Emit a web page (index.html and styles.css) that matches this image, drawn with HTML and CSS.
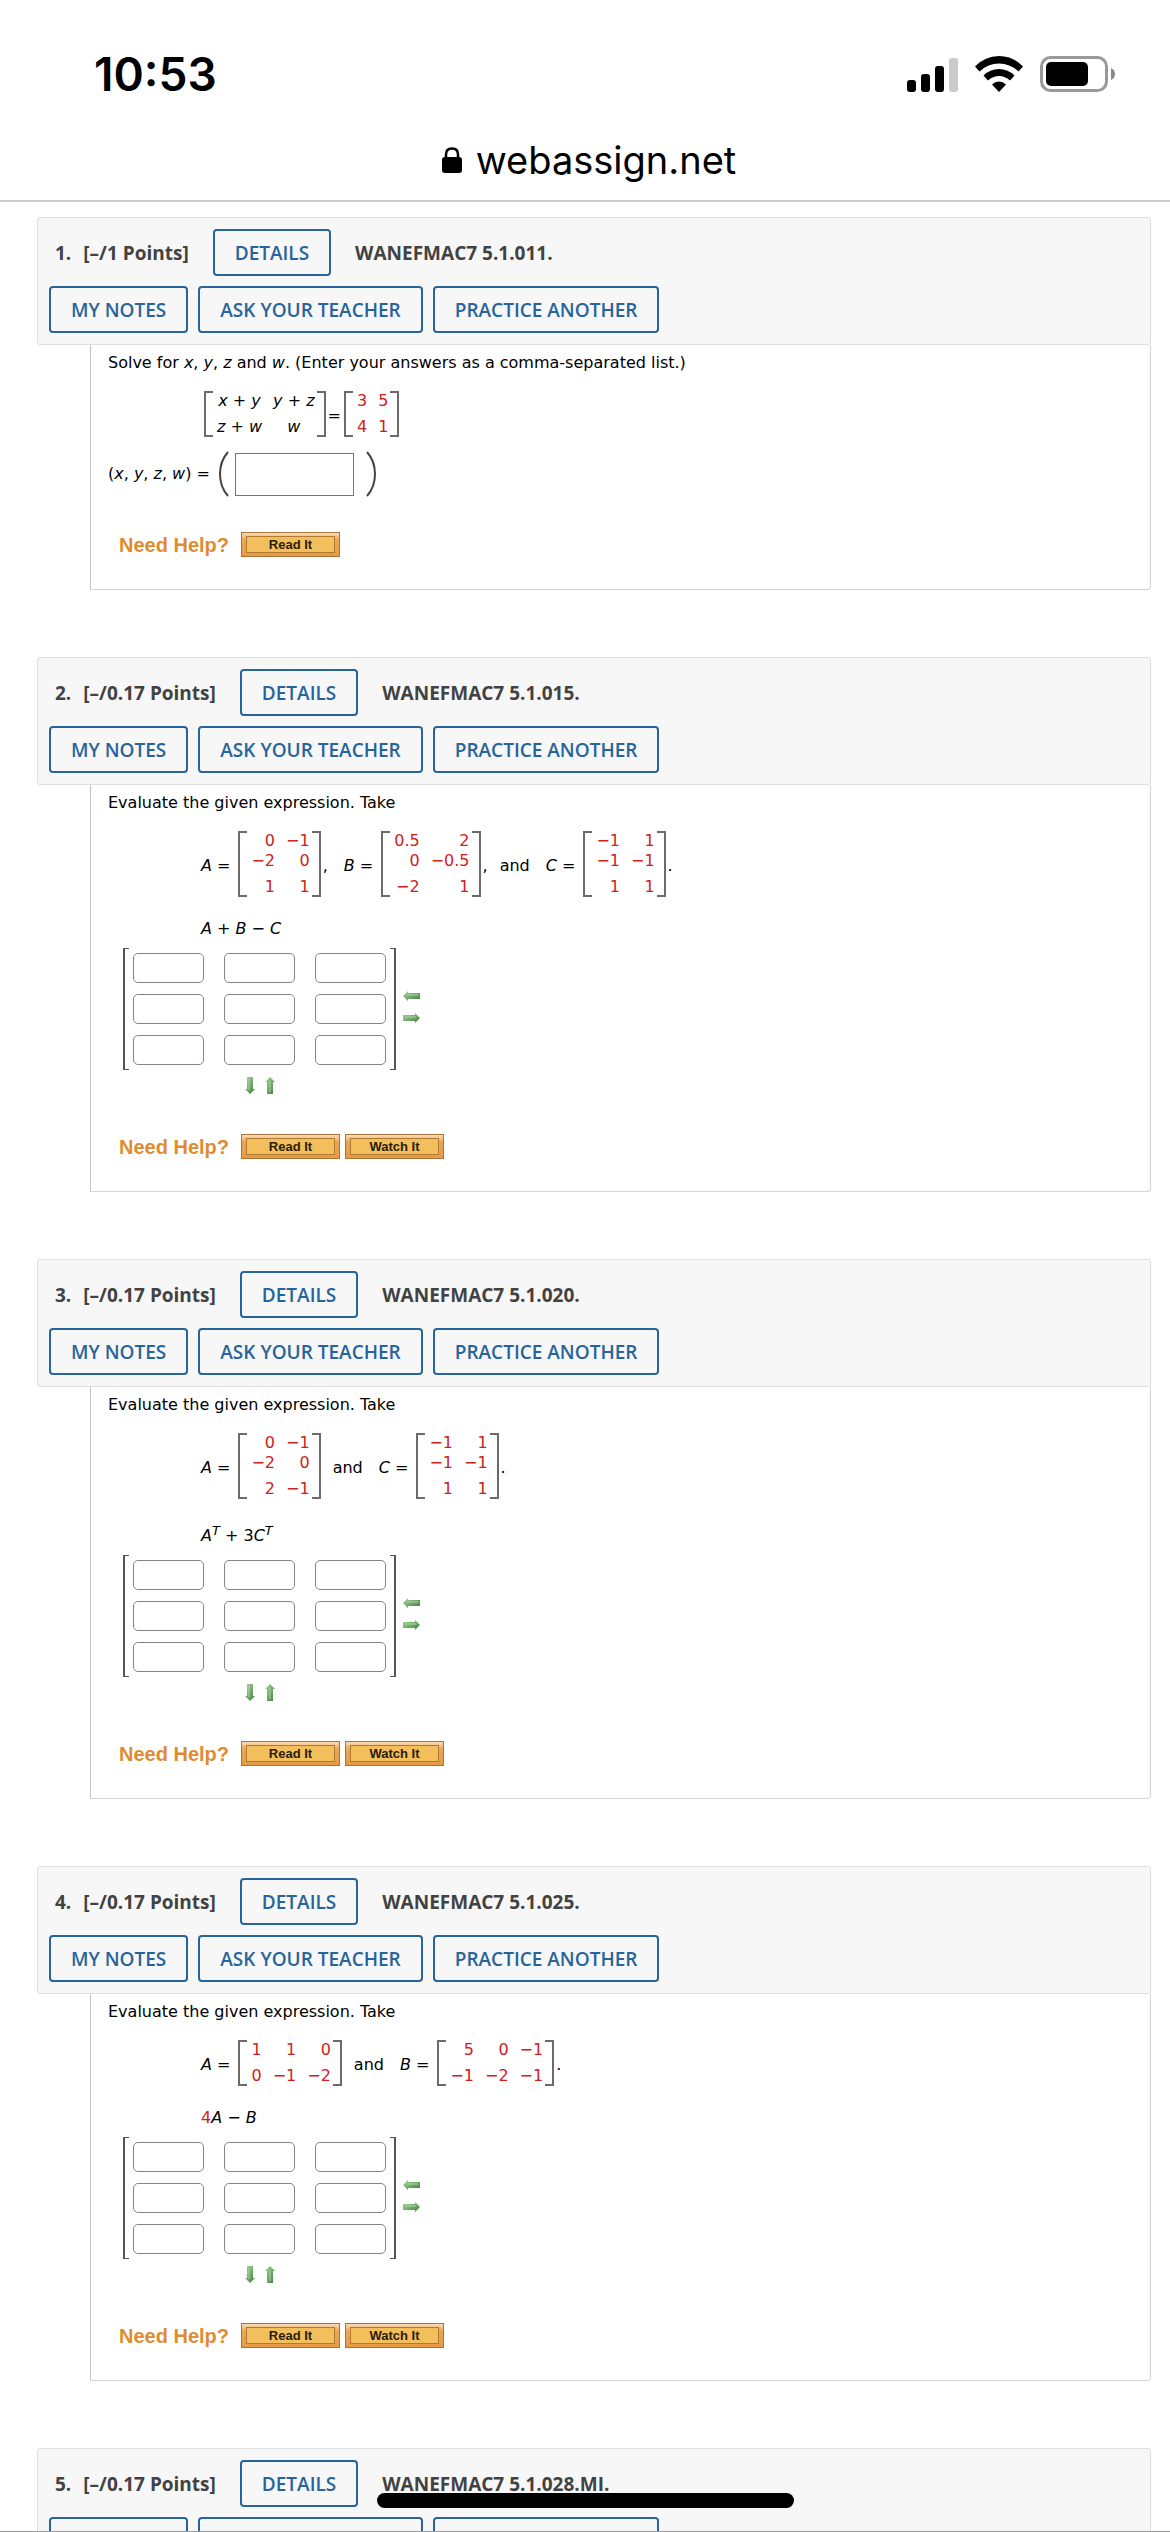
FILE: index.html
```html
<!DOCTYPE html>
<html lang="en">
<head>
    <meta charset="UTF-8">
    <meta name="viewport" content="width=device-width, initial-scale=1.0">
    <title>webassign.net</title>
    <link rel="stylesheet" href="styles.css">
</head>
<body>

<!-- shared icons -->
<svg class="defs" width="0" height="0" aria-hidden="true">
    <defs>
        <linearGradient id="green" x1="0" y1="0" x2="1" y2="1">
            <stop offset="0" stop-color="#a9d8a0"/>
            <stop offset="1" stop-color="#3f7d3a"/>
        </linearGradient>
        <symbol id="arrow-left" viewBox="0 0 17 10">
            <path d="M0 5L5 0V2H17V8H5V10Z" fill="url(#green)"/>
            <path d="M4 4H15" stroke="#a5d69c" stroke-width="1"/>
        </symbol>
        <symbol id="arrow-right" viewBox="0 0 17 10">
            <path d="M17 5L12 0V2H0V8H12V10Z" fill="url(#green)"/>
            <path d="M2 4H13" stroke="#a5d69c" stroke-width="1"/>
        </symbol>
        <symbol id="arrow-down" viewBox="0 0 10 17">
            <path d="M5 17L0 12H2V0H8V12H10Z" fill="url(#green)"/>
            <path d="M4 2V13" stroke="#a5d69c" stroke-width="1"/>
        </symbol>
        <symbol id="arrow-up" viewBox="0 0 10 17">
            <path d="M5 0L0 5H2V17H8V5H10Z" fill="url(#green)"/>
            <path d="M5 4V15" stroke="#a5d69c" stroke-width="1"/>
        </symbol>
    </defs>
</svg>

<div class="screen">
    <header class="browser-bar">
        <div class="status">
            <span class="time">10:53</span>
            <div class="status-icons">
                <svg width="51" height="36" viewBox="0 0 51 36">
                    <rect x="0" y="24" width="9" height="12" rx="3"/>
                    <rect x="14" y="18" width="9" height="18" rx="3"/>
                    <rect x="28" y="10" width="9" height="26" rx="3"/>
                    <rect x="42" y="2" width="9" height="34" rx="3" fill="#cbcbcb"/>
                </svg>
                <svg width="48" height="36" viewBox="0 0 48 36">
                    <path d="M0 10.500Q10 0 24 0T48 10.500L43.500 15.500Q35 7.500 24 7.500T4.500 15.500Z"/>
                    <path d="M8.500 19.500Q15 13 24 13T39.500 19.500L35 24.500Q30 20 24 20T13 24.500Z"/>
                    <path d="M17 28.500Q20 25.500 24 25.500T31 28.500L24 36Z"/>
                </svg>
                <svg width="75" height="36" viewBox="0 0 75 36">
                    <rect x="1.500" y="1.500" width="65" height="33" rx="9" fill="none" stroke="#999" stroke-width="3"/>
                    <rect x="6" y="6" width="42" height="24" rx="5"/>
                    <path d="M71 12Q75 14 75 18T71 24Z" fill="#888"/>
                </svg>
            </div>
        </div>
        <div class="address">
            <svg width="20" height="26" viewBox="0 0 20 26">
                <rect x="0" y="10" width="20" height="16" rx="3"/>
                <path d="M4 12V7.500Q4 1.500 10 1.500T16 7.500V12" fill="none" stroke="#000" stroke-width="2.500"/>
            </svg>
            <span>webassign.net</span>
        </div>
    </header>

    <main class="questions">

        <section class="question">
            <div class="question-header">
                <div class="title-row">
                    <span class="number">1.</span>
                    <span>[–/1 Points]</span>
                    <button class="btn details">DETAILS</button>
                    <span>WANEFMAC7 5.1.011.</span>
                </div>
                <div class="button-row">
                    <button class="btn">MY NOTES</button>
                    <button class="btn">ASK YOUR TEACHER</button>
                    <button class="btn">PRACTICE ANOTHER</button>
                </div>
            </div>
            <div class="question-body">
                <p class="prompt">Solve for <i>x</i>, <i>y</i>, <i>z</i> and <i>w</i>. (Enter your answers as a comma-separated list.)</p>
                <div class="equation">
                    <table class="matrix centered">
                        <tr><td><i>x</i> + <i>y</i></td><td><i>y</i> + <i>z</i></td></tr>
                        <tr><td><i>z</i> + <i>w</i></td><td><i>w</i></td></tr>
                    </table>
                    <span class="punct">=</span>
                    <table class="matrix red">
                        <tr><td>3</td><td>5</td></tr>
                        <tr><td>4</td><td>1</td></tr>
                    </table>
                </div>
                <div class="tuple">
                    <label for="tuple">(<i>x</i>, <i>y</i>, <i>z</i>, <i>w</i>) =</label>
                    <svg width="10" height="46" viewBox="0 0 10 46"><path d="M9 1Q1 10 1 23T9 45" /></svg>
                    <input type="text" id="tuple">
                    <svg width="10" height="46" viewBox="0 0 10 46"><path d="M1 1Q9 10 9 23T1 45" /></svg>
                </div>
                <div class="help">
                    <span>Need Help?</span>
                    <button><span>Read It</span></button>
                </div>
            </div>
        </section>

        <section class="question">
            <div class="question-header">
                <div class="title-row">
                    <span class="number">2.</span>
                    <span>[–/0.17 Points]</span>
                    <button class="btn details">DETAILS</button>
                    <span>WANEFMAC7 5.1.015.</span>
                </div>
                <div class="button-row">
                    <button class="btn">MY NOTES</button>
                    <button class="btn">ASK YOUR TEACHER</button>
                    <button class="btn">PRACTICE ANOTHER</button>
                </div>
            </div>
            <div class="question-body">
                <p class="prompt">Evaluate the given expression. Take</p>
                <div class="equation">
                    <span class="term"><i>A</i> =</span>
                    <table class="matrix red">
                        <tr><td>0</td><td>−1</td></tr>
                        <tr><td>−2</td><td>0</td></tr>
                        <tr><td>1</td><td>1</td></tr>
                    </table>
                    <span class="punct">,</span>
                    <span class="term"><i>B</i> =</span>
                    <table class="matrix red">
                        <tr><td>0.5</td><td>2</td></tr>
                        <tr><td>0</td><td>−0.5</td></tr>
                        <tr><td>−2</td><td>1</td></tr>
                    </table>
                    <span class="punct">,</span>
                    <span class="word">and</span>
                    <span class="term"><i>C</i> =</span>
                    <table class="matrix red">
                        <tr><td>−1</td><td>1</td></tr>
                        <tr><td>−1</td><td>−1</td></tr>
                        <tr><td>1</td><td>1</td></tr>
                    </table>
                    <span class="punct">.</span>
                </div>
                <p class="expression"><i>A</i> + <i>B</i> − <i>C</i></p>
                <div class="answer">
                    <div class="cells">
                        <input type="text" aria-label="row 1 column 1"><input type="text" aria-label="row 1 column 2"><input type="text" aria-label="row 1 column 3">
                        <input type="text" aria-label="row 2 column 1"><input type="text" aria-label="row 2 column 2"><input type="text" aria-label="row 2 column 3">
                        <input type="text" aria-label="row 3 column 1"><input type="text" aria-label="row 3 column 2"><input type="text" aria-label="row 3 column 3">
                    </div>
                    <div class="resize-columns">
                        <button aria-label="remove column"><svg width="17" height="10"><use href="#arrow-left"/></svg></button>
                        <button aria-label="add column"><svg width="17" height="10"><use href="#arrow-right"/></svg></button>
                    </div>
                    <div class="resize-rows">
                        <button aria-label="add row"><svg width="10" height="17"><use href="#arrow-down"/></svg></button>
                        <button aria-label="remove row"><svg width="10" height="17"><use href="#arrow-up"/></svg></button>
                    </div>
                </div>
                <div class="help">
                    <span>Need Help?</span>
                    <button><span>Read It</span></button>
                    <button><span>Watch It</span></button>
                </div>
            </div>
        </section>

        <section class="question">
            <div class="question-header">
                <div class="title-row">
                    <span class="number">3.</span>
                    <span>[–/0.17 Points]</span>
                    <button class="btn details">DETAILS</button>
                    <span>WANEFMAC7 5.1.020.</span>
                </div>
                <div class="button-row">
                    <button class="btn">MY NOTES</button>
                    <button class="btn">ASK YOUR TEACHER</button>
                    <button class="btn">PRACTICE ANOTHER</button>
                </div>
            </div>
            <div class="question-body">
                <p class="prompt">Evaluate the given expression. Take</p>
                <div class="equation">
                    <span class="term"><i>A</i> =</span>
                    <table class="matrix red">
                        <tr><td>0</td><td>−1</td></tr>
                        <tr><td>−2</td><td>0</td></tr>
                        <tr><td>2</td><td>−1</td></tr>
                    </table>
                    <span class="word">and</span>
                    <span class="term"><i>C</i> =</span>
                    <table class="matrix red">
                        <tr><td>−1</td><td>1</td></tr>
                        <tr><td>−1</td><td>−1</td></tr>
                        <tr><td>1</td><td>1</td></tr>
                    </table>
                    <span class="punct">.</span>
                </div>
                <p class="expression"><i>A<sup>T</sup></i> + 3<i>C<sup>T</sup></i></p>
                <div class="answer">
                    <div class="cells">
                        <input type="text" aria-label="row 1 column 1"><input type="text" aria-label="row 1 column 2"><input type="text" aria-label="row 1 column 3">
                        <input type="text" aria-label="row 2 column 1"><input type="text" aria-label="row 2 column 2"><input type="text" aria-label="row 2 column 3">
                        <input type="text" aria-label="row 3 column 1"><input type="text" aria-label="row 3 column 2"><input type="text" aria-label="row 3 column 3">
                    </div>
                    <div class="resize-columns">
                        <button aria-label="remove column"><svg width="17" height="10"><use href="#arrow-left"/></svg></button>
                        <button aria-label="add column"><svg width="17" height="10"><use href="#arrow-right"/></svg></button>
                    </div>
                    <div class="resize-rows">
                        <button aria-label="add row"><svg width="10" height="17"><use href="#arrow-down"/></svg></button>
                        <button aria-label="remove row"><svg width="10" height="17"><use href="#arrow-up"/></svg></button>
                    </div>
                </div>
                <div class="help">
                    <span>Need Help?</span>
                    <button><span>Read It</span></button>
                    <button><span>Watch It</span></button>
                </div>
            </div>
        </section>

        <section class="question">
            <div class="question-header">
                <div class="title-row">
                    <span class="number">4.</span>
                    <span>[–/0.17 Points]</span>
                    <button class="btn details">DETAILS</button>
                    <span>WANEFMAC7 5.1.025.</span>
                </div>
                <div class="button-row">
                    <button class="btn">MY NOTES</button>
                    <button class="btn">ASK YOUR TEACHER</button>
                    <button class="btn">PRACTICE ANOTHER</button>
                </div>
            </div>
            <div class="question-body">
                <p class="prompt">Evaluate the given expression. Take</p>
                <div class="equation">
                    <span class="term"><i>A</i> =</span>
                    <table class="matrix red">
                        <tr><td>1</td><td>1</td><td>0</td></tr>
                        <tr><td>0</td><td>−1</td><td>−2</td></tr>
                    </table>
                    <span class="word">and</span>
                    <span class="term"><i>B</i> =</span>
                    <table class="matrix red">
                        <tr><td>5</td><td>0</td><td>−1</td></tr>
                        <tr><td>−1</td><td>−2</td><td>−1</td></tr>
                    </table>
                    <span class="punct">.</span>
                </div>
                <p class="expression"><span class="red">4</span><i>A</i> − <i>B</i></p>
                <div class="answer">
                    <div class="cells">
                        <input type="text" aria-label="row 1 column 1"><input type="text" aria-label="row 1 column 2"><input type="text" aria-label="row 1 column 3">
                        <input type="text" aria-label="row 2 column 1"><input type="text" aria-label="row 2 column 2"><input type="text" aria-label="row 2 column 3">
                        <input type="text" aria-label="row 3 column 1"><input type="text" aria-label="row 3 column 2"><input type="text" aria-label="row 3 column 3">
                    </div>
                    <div class="resize-columns">
                        <button aria-label="remove column"><svg width="17" height="10"><use href="#arrow-left"/></svg></button>
                        <button aria-label="add column"><svg width="17" height="10"><use href="#arrow-right"/></svg></button>
                    </div>
                    <div class="resize-rows">
                        <button aria-label="add row"><svg width="10" height="17"><use href="#arrow-down"/></svg></button>
                        <button aria-label="remove row"><svg width="10" height="17"><use href="#arrow-up"/></svg></button>
                    </div>
                </div>
                <div class="help">
                    <span>Need Help?</span>
                    <button><span>Read It</span></button>
                    <button><span>Watch It</span></button>
                </div>
            </div>
        </section>

        <section class="question">
            <div class="question-header">
                <div class="title-row">
                    <span class="number">5.</span>
                    <span>[–/0.17 Points]</span>
                    <button class="btn details">DETAILS</button>
                    <span>WANEFMAC7 5.1.028.MI.</span>
                </div>
                <div class="button-row">
                    <button class="btn">MY NOTES</button>
                    <button class="btn">ASK YOUR TEACHER</button>
                    <button class="btn">PRACTICE ANOTHER</button>
                </div>
            </div>
        </section>

    </main>
</div>

<div class="home-indicator"></div>

</body>
</html>
```

FILE: styles.css
```css
* {
    box-sizing: border-box;
}
body {
    margin: 0;
    background-color: #fff;
    color: #000;
    font-family: Verdana, "DejaVu Sans", sans-serif;
    font-size: 16px;
    line-height: 20px;
}
button, input {
    margin: 0;
    font-family: inherit;
}
svg {
    display: block;
}
.defs {
    position: absolute;
}
.screen {
    height: 100vh;
    overflow: hidden;
    border-bottom: 1px solid #999;
}

/* phone status bar and address */
.browser-bar {
    padding-top: 48px;
    border-bottom: 2px solid #cacaca;
    font-family: Inter, sans-serif;
}
.status {
    display: flex;
    justify-content: space-between;
    align-items: center;
    padding: 0 55px 0 94px;
}
.time {
    font-size: 46px;
    font-weight: 600;
    line-height: 52px;
}
.status-icons {
    display: flex;
    gap: 17px;
}
.address {
    display: flex;
    justify-content: center;
    align-items: center;
    gap: 14px;
    padding: 35px 0 15px 8px;
    font-size: 38px;
    line-height: 50px;
}

/* questions */
.questions {
    padding: 15px 19px 0 37px;
}
.question {
    margin-bottom: 67px;
}
.question-header {
    padding: 11px;
    border: 1px solid #dfdfdf;
    border-radius: 3px;
    background-color: #f7f7f7;
}
.title-row {
    display: flex;
    align-items: center;
    gap: 24px;
    padding-left: 6px;
    color: #424242;
    font-family: "Open Sans", sans-serif;
    font-size: 19px;
    font-weight: 700;
}
.number {
    margin-right: -12px;
}
.button-row {
    display: flex;
    gap: 10px;
    margin-top: 10px;
}
.btn {
    height: 47px;
    padding: 0 20px;
    border: 2px solid #27649b;
    border-radius: 4px;
    background-color: transparent;
    color: #27649b;
    font-family: "Open Sans", sans-serif;
    font-size: 19px;
    font-weight: 600;
}
.question-body {
    margin-left: 53px;
    padding: 8px 17px 32px;
    border: 1px solid #d4d4d4;
    border-left-color: #c4c4c4;
    border-top: 0;
    border-radius: 0 0 4px 0;
}
.prompt {
    margin: 0 0 18px;
}

/* math */
.equation {
    display: flex;
    align-items: center;
    margin-left: 93px;
}
.equation > span {
    padding-top: 3px;
}
.matrix {
    position: relative;
    margin-left: 3px;
    padding: 0 2px;
    border-spacing: 0;
    text-align: right;
}
.matrix::before, .matrix::after {
    content: "";
    position: absolute;
    top: 0;
    bottom: 0;
    width: 7px;
    border: 2px solid #6b6b6b;
}
.matrix::before {
    left: 0;
    border-right: 0;
}
.matrix::after {
    right: 0;
    border-left: 0;
}
.matrix td {
    padding: 0 0 0 11px;
}
.matrix td:last-child {
    padding-right: 9px;
}
.matrix tr:last-child td {
    padding-top: 6px;
}
.centered {
    text-align: center;
}
.red {
    color: #d0201b;
}
.term {
    margin: 0 5px 0 16px;
}
.term:first-child {
    margin-left: 0;
}
.word {
    margin-left: 12px;
}
.punct {
    margin-left: 2px;
}
.expression {
    margin: 22px 0 9px 93px;
}
.expression sup {
    font-size: 13px;
}
.tuple {
    display: flex;
    align-items: center;
    margin: 14px 0 35px;
}
.tuple input {
    width: 119px;
    height: 43px;
    margin: 0 12px 0 6px;
    border: 1px solid #767676;
    font-size: 16px;
}
.tuple label {
    margin-right: 9px;
}
.tuple svg {
    fill: none;
    stroke: #444;
    stroke-width: 2;
}

/* answer grid */
.answer {
    display: grid;
    grid-template-columns: max-content max-content;
    gap: 7px;
    align-items: center;
    margin: 0 0 40px 15px;
}
.cells {
    position: relative;
    display: grid;
    grid-template-columns: repeat(3, 71px);
    gap: 11px 20px;
    padding: 5px 10px;
}
.cells::before, .cells::after {
    content: "";
    position: absolute;
    top: 0;
    bottom: 0;
    width: 4px;
    border: solid #555;
    border-width: 1px 0 1px 2px;
}
.cells::before {
    left: 0;
}
.cells::after {
    right: 0;
    border-width: 1px 2px 1px 0;
}
.cells input {
    width: 100%;
    height: 30px;
    border: 1px solid #858585;
    border-radius: 5px;
}
.answer button {
    padding: 0;
    border: 0;
    background: none;
}
.resize-columns {
    display: grid;
    gap: 12px;
    padding-bottom: 4px;
}
.resize-rows {
    display: flex;
    justify-content: center;
    gap: 10px;
}

/* help */
.help {
    display: flex;
    align-items: center;
    gap: 5px;
    margin-left: 11px;
    font-family: Arial, "Liberation Sans", sans-serif;
    font-weight: 700;
}
.help > span {
    margin-right: 7px;
    color: #df8c30;
    font-size: 20px;
}
.help button {
    display: flex;
    width: 99px;
    height: 25px;
    padding: 3px 4px;
    border: 1px solid #a8743c;
    background: linear-gradient(#fbdcb8, #eba657 30%, #e79a44);
}
.help button span {
    flex: 1;
    border: 1px solid #b07a30;
    background-color: #f3be5c;
    color: #2a1d08;
    font-size: 13px;
    font-weight: 700;
    line-height: 15px;
}

.home-indicator {
    position: fixed;
    bottom: 24px;
    left: 50%;
    width: 417px;
    height: 15px;
    margin-left: -208px;
    border-radius: 8px;
    background-color: #000;
}
```
